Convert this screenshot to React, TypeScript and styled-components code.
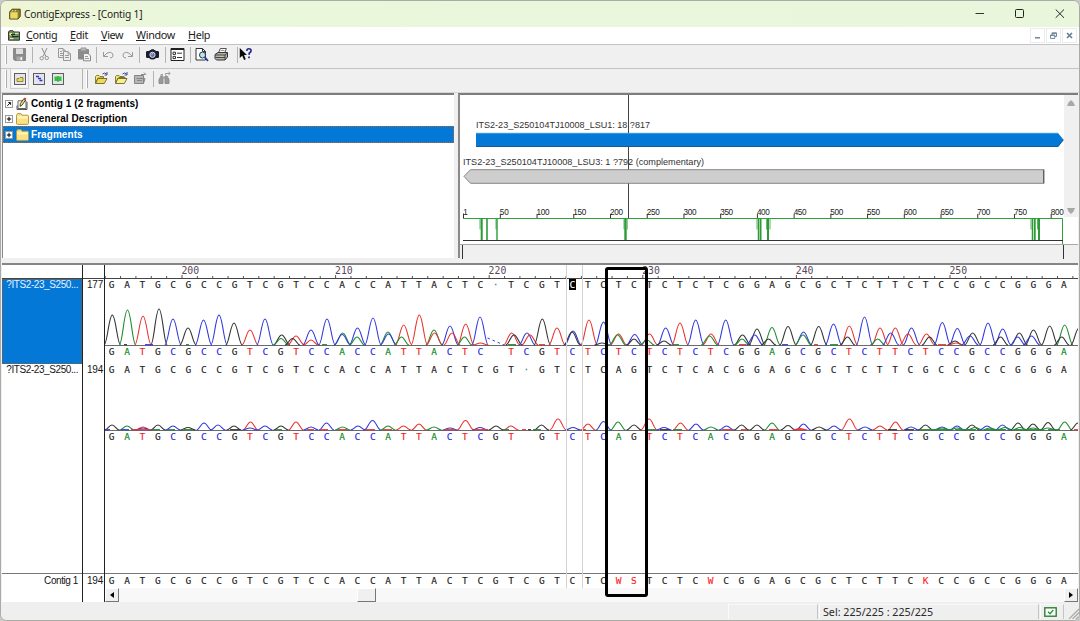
import React from "react";
import styled, { createGlobalStyle } from "styled-components";

const GlobalStyle = createGlobalStyle`
  * { box-sizing: border-box; }
  html, body { margin: 0; padding: 0; background: #c9c9c9; overflow: hidden; }
  svg { display: block; }
`;

const SANS = `"Liberation Sans", Arial, sans-serif`;
const UI = `"Noto Sans", "Open Sans", sans-serif`;
const MONO = `"DejaVu Sans Mono", "Liberation Mono", monospace`;

const BLUE = "#0478d7";

const Window = styled.div`
  position: relative;
  width: 1080px;
  height: 621px;
  display: flex;
  flex-direction: column;
  background: #f0f0f0;
  border: 1px solid #a9aca6;
  border-radius: 7px;
  overflow: hidden;
`;

const TitleBar = styled.header`
  display: flex;
  align-items: center;
  height: 26px;
  padding: 0 14px 0 8px;
  background: linear-gradient(90deg, #f0f5d4 0, #e9f7db 180px, #eaf6dc 100%);
  flex: none;
`;

const Title = styled.span`
  margin-left: 3px;
  font: 10.2px/26px ${UI};
  letter-spacing: -0.2px;
  color: #1e1e1e;
  white-space: nowrap;
  flex: 1;
`;

const CaptionButtons = styled.div`
  display: flex;
  gap: 30px;
  align-items: center;
`;

const MenuBar = styled.nav`
  display: flex;
  align-items: center;
  height: 17px;
  padding: 0 2px 0 7px;
  background: #fff;
  flex: none;
`;

const MenuItem = styled.span<{ $w: number }>`
  width: ${(p) => p.$w}px;
  font: 10.8px/15px ${UI};
  letter-spacing: -0.35px;
  color: #1c1c1c;
  white-space: nowrap;
  position: relative;
  top: -1px;
  &::first-letter { text-decoration: underline; }
`;

const MdiButtons = styled.div`
  display: flex;
  gap: 1px;
  margin-left: auto;
`;

const MdiButton = styled.span`
  width: 15px;
  height: 15px;
  border: 1px solid #ececec;
  display: flex;
  align-items: center;
  justify-content: center;
`;

const Toolbar = styled.div<{ $lift: number }>`
  display: flex;
  align-items: center;
  height: 24px;
  padding: 0 0 ${(p) => p.$lift}px 4px;
  border-top: 1px solid #c4c4c4;
  background: #f0f0f0;
  flex: none;
`;

const Grip = styled.i<{ $ml?: number }>`
  width: 2px;
  height: 18px;
  margin-left: ${(p) => p.$ml ?? 0}px;
  border-right: 1px solid #aaa;
  border-left: 1px solid #fff;
`;

const Divider = styled.i<{ $ml: number; $tall?: boolean }>`
  width: 1px;
  height: ${(p) => (p.$tall ? 20 : 16)}px;
  margin-left: ${(p) => p.$ml}px;
  background: #b4b4b4;
`;

const Tool = styled.span<{ $ml: number; $pressed?: boolean }>`
  width: 15px;
  height: ${(p) => (p.$pressed ? 17 : 15)}px;
  margin-left: ${(p) => p.$ml}px;
  display: flex;
  align-items: center;
  justify-content: center;
  outline: ${(p) => (p.$pressed ? "1px solid #cfcfcf" : "none")};
  outline-offset: 1px;
  background: ${(p) => (p.$pressed ? "#f8f8f8" : "transparent")};
`;

const UpperPanes = styled.section`
  display: flex;
  gap: 4px;
  height: 168px;
  padding: 0 1px 2px;
  border-top: 1px solid #d6d6d6;
  flex: none;
`;

const TreePane = styled.div`
  width: 453px;
  background: #fff;
  border-top: 2px solid #7d7d7d;
  border-left: 1px solid #8a8a8a;
  padding-top: 1px;
`;

const TreeRow = styled.div<{ $h: number; $selected?: boolean }>`
  display: flex;
  align-items: center;
  height: ${(p) => p.$h}px;
  padding-left: 2px;
  font: bold 10px ${SANS};
  letter-spacing: 0.06px;
  color: ${(p) => (p.$selected ? "#fff" : "#000")};
  background: ${(p) => (p.$selected ? BLUE : "transparent")};
  outline: ${(p) => (p.$selected ? "1px dotted #b8682c" : "none")};
  outline-offset: -1px;
  white-space: nowrap;
`;

const Expander = styled.span`
  width: 8px;
  height: 8px;
  margin-right: 3px;
  flex: none;
`;

const RowIcon = styled.span`
  width: 14px;
  margin-right: 1px;
  flex: none;
`;

const MapPane = styled.div`
  flex: 1;
  display: flex;
  flex-direction: column;
  border-top: 2px solid #7d7d7d;
  border-left: 2px solid #8a8a8a;
  background: #fff;
`;

const MapBody = styled.div`
  display: flex;
  height: 149px;
`;

const MapScroll = styled.div`
  display: flex;
  flex-direction: column;
  justify-content: space-between;
  align-items: center;
  width: 14px;
  height: 122px;
  padding: 5px 0 3px;
  background: #f0f0f0;
`;

const MapFooter = styled.div`
  flex: 1;
  border-top: 1px solid #a8a8a8;
  background: #f0f0f0;
  display: flex;
  justify-content: space-between;
  padding: 0 14px 0 2px;
`;

const FooterMark = styled.i`
  width: 1px;
  height: 14px;
  background: #333;
`;

const Assembly = styled.section`
  position: relative;
  display: flex;
  height: 339px;
  margin: 3px 1px 0;
  border-top: 2px solid #858585;
  background: #fff;
  flex: none;
`;

const Column = styled.div<{ $w?: number }>`
  display: flex;
  flex-direction: column;
  ${(p) => (p.$w ? `width: ${p.$w}px; border-right: 1px solid #222;` : "flex: 1; min-width: 0;")}
`;

const Band = styled.div<{ $h: number; $line?: string; $selected?: boolean; $pt?: number }>`
  height: ${(p) => p.$h}px;
  padding-top: ${(p) => p.$pt ?? 0}px;
  flex: none;
  border-bottom: ${(p) => (p.$line ? `1px solid ${p.$line}` : "none")};
  background: ${(p) => (p.$selected ? BLUE : "transparent")};
  color: ${(p) => (p.$selected ? "#e4f1ff" : "#161616")};
  outline: ${(p) => (p.$selected ? "1px dotted #8a5a2c" : "none")};
  outline-offset: -1px;
  font: 10px/12px ${SANS};
  white-space: nowrap;
`;

const NameText = styled.div`
  text-align: right;
  padding-right: 4px;
  letter-spacing: -0.42px;
`;

const OffsetText = styled.div`
  text-align: right;
  padding-right: 1px;
  letter-spacing: -0.2px;
`;

const Bases = styled.div`
  display: flex;
  height: 12px;
  margin-left: -1px;
  font: 9.5px/12px ${MONO};
`;

const Base = styled.span<{ $color: string; $cursor?: boolean }>`
  width: 15.36px;
  flex: none;
  text-align: center;
  color: ${(p) => (p.$cursor ? "#fff" : p.$color)};
  -webkit-text-stroke: 0.12px currentColor;
  b { font-weight: normal; background: ${(p) => (p.$cursor ? "#000" : "transparent")}; padding: 0 1px; }
`;

const HScroll = styled.div`
  display: flex;
  height: 14px;
  background: #f8f8f8;
`;

const ScrollPart = styled.span<{ $w: number; $ml?: number }>`
  width: ${(p) => p.$w}px;
  height: 14px;
  margin-left: ${(p) => (p.$ml === undefined ? "auto" : p.$ml + "px")};
  background: #f0f0f0;
  border: 1px solid #fff;
  border-right-color: #777;
  border-bottom-color: #777;
  display: flex;
  align-items: center;
  justify-content: center;
`;

const ColumnMark = styled.i`
  position: absolute;
  left: 564px;
  top: 0;
  width: 17px;
  height: 323px;
  border: solid #d2d2d2;
  border-width: 0 1px;
`;

const Highlight = styled.i`
  position: absolute;
  left: 603px;
  top: 2px;
  width: 43px;
  height: 330px;
  border: 3px solid #000;
  border-radius: 3px;
`;

const StatusBar = styled.footer`
  display: flex;
  align-items: stretch;
  justify-content: flex-end;
  gap: 1px;
  flex: 1;
  padding-top: 2px;
  background: #efefef;
`;

const StatusCell = styled.div<{ $w: number }>`
  width: ${(p) => p.$w}px;
  height: 15px;
  padding-left: 3px;
  border-right: 1px solid #c4c4c4;
  border-top: 1px solid #f8f8f8;
  border-left: 1px solid #fbfbfb;
  font: 10.7px/14px ${UI};
  color: #2a2a2a;
  white-space: nowrap;
  display: flex;
  align-items: center;
`;

type Ink = "k" | "g" | "r" | "b";
const INK: Record<Ink, string> = { k: "#333", g: "#1e8c30", r: "#e8342e", b: "#3038dc" };
const BASE_INK: Record<string, string> = { G: "#1a1a1a", A: "#0c8a1c", T: "#ee1c1c", C: "#2828e4" };

const READ_1 = "GATGCGCCGTCGTCCACCATTACTC-TCGTCTCTCTCTCTCGGAGCGCTCTTCTCCGCCGGGA";
const READ_2 = "GATGCGCCGTCGTCCACCATTACTCGT-GTCTCAGTCTCACGGAGCGCTCTTCGCCGCCGGGA";
const CONTIG = "GATGCGCCGTCGTCCACCATTACTCGTCGTCTCWSTCTCWCGGAGCGCTCTTCKCCGCCGGGA";

/* ink, centre x, height */
type Peak = [Ink, number, number];

const TRACE_1: Peak[] = [
  ["k", 112.3, 30], ["g", 127.5, 35], ["r", 143, 29], ["k", 159, 36], ["b", 173, 26], ["k", 188, 17],
  ["b", 203.5, 25], ["b", 219, 30], ["k", 234, 22], ["r", 250, 15], ["b", 265, 26],
  ["k", 281.7, 10], ["g", 281, 6.5], ["r", 296, 9], ["k", 292.5, 6.5], ["b", 311, 15], ["r", 311, 5],
  ["b", 327, 26], ["g", 342.7, 12], ["b", 342.2, 10.5], ["b", 357.5, 17], ["g", 357, 8], ["b", 373, 27],
  ["g", 388, 13], ["b", 388.5, 11], ["r", 403.7, 20], ["g", 401.5, 8], ["r", 419.3, 30],
  ["g", 434, 15], ["r", 434.5, 12], ["b", 450, 19], ["r", 452, 12], ["r", 465.7, 21], ["g", 464.5, 8],
  ["b", 480, 28], ["r", 480.5, 2], ["r", 511.7, 12], ["k", 514, 10], ["b", 527, 12], ["r", 530, 10],
  ["k", 542.3, 26], ["r", 557, 17], ["b", 573, 14], ["k", 572, 13], ["r", 589, 25], ["b", 603.5, 23],
  ["k", 602, 2], ["r", 618.5, 11], ["g", 617.5, 10], ["b", 634.7, 10.5], ["k", 634, 6], ["r", 649.5, 11],
  ["g", 647, 5], ["b", 665.7, 17], ["k", 664, 4], ["r", 680, 22], ["b", 695.7, 25], ["r", 711, 11],
  ["g", 709.5, 9], ["b", 725.7, 25], ["k", 742.5, 10], ["g", 742, 6], ["k", 757, 16], ["b", 754.7, 10],
  ["g", 772, 17.5], ["k", 768.5, 6], ["k", 788, 18.5], ["b", 803.5, 13], ["g", 803, 10],
  ["k", 818.7, 18.5], ["b", 833.5, 21], ["r", 849.3, 19], ["k", 847.5, 8], ["b", 864.5, 28],
  ["r", 880, 17], ["g", 877.7, 6], ["r", 895.3, 17], ["b", 890.7, 12], ["b", 911.5, 17], ["r", 908, 11],
  ["r", 926.5, 11], ["k", 929.5, 8], ["b", 942.3, 22.5], ["b", 957.3, 16.5], ["k", 955, 4], ["r", 956, 2],
  ["k", 972.7, 12], ["b", 970, 9], ["b", 988, 22], ["b", 1002.7, 16], ["k", 1000.5, 8],
  ["k", 1019.3, 12], ["b", 1017.7, 8], ["k", 1033.5, 15], ["b", 1031.5, 9], ["k", 1049.7, 19],
  ["g", 1064.7, 20], ["k", 1061.7, 8], ["k", 1079, 17],
];

const TRACE_2: Peak[] = [
  ["k", 112, 5], ["g", 127, 4], ["r", 143, 3], ["b", 143, 2], ["k", 158, 5], ["b", 173, 4], ["k", 188, 2.5],
  ["b", 204, 7], ["b", 218, 5], ["k", 234, 4], ["r", 250.5, 8], ["b", 250, 2], ["b", 265, 4],
  ["k", 281, 4], ["r", 296, 8], ["b", 311, 3], ["b", 326.5, 7], ["g", 342.5, 3], ["b", 358, 4],
  ["b", 372.5, 9.5], ["g", 388, 4], ["r", 403.5, 4], ["r", 419, 6], ["g", 434, 3], ["b", 450, 2],
  ["r", 465.5, 9.5], ["b", 480, 2.5], ["k", 496, 4], ["r", 511, 4], ["k", 541.5, 5], ["r", 558, 11],
  ["b", 573, 2.5], ["r", 588, 6], ["b", 603.5, 8.5], ["g", 618, 8], ["k", 634, 5], ["r", 649, 11],
  ["b", 664, 2.5], ["r", 680.5, 7], ["b", 696, 6], ["g", 711, 3], ["b", 726.5, 4], ["k", 741.5, 5],
  ["k", 757, 5], ["g", 772, 7], ["k", 788, 4.5], ["b", 803.5, 6], ["r", 800, 1.5], ["k", 819, 3],
  ["b", 834, 4], ["r", 849.5, 11], ["b", 865, 3], ["r", 880, 4], ["r", 895.5, 8], ["b", 911, 3],
  ["k", 925.5, 5], ["b", 942, 3], ["g", 942, 2], ["b", 957, 4], ["g", 957, 2], ["k", 972, 5], ["g", 975, 2.5],
  ["b", 987, 4], ["g", 990, 2], ["b", 1002.5, 5], ["g", 1005, 2.5], ["k", 1018, 7], ["g", 1020, 2.5],
  ["k", 1033, 6], ["g", 1033, 2], ["k", 1048, 7.5], ["g", 1048, 2], ["g", 1064.7, 8], ["k", 1078, 7],
];

/* short coloured runs lying on the zero line: ink, start x, end x */
const FLOOR_1: [Ink, number, number][] = [
  ["k", 124, 127], ["b", 145, 153], ["g", 186, 189], ["g", 322, 327], ["g", 508, 516], ["r", 539, 545],
  ["g", 673, 679], ["r", 739, 746], ["b", 782, 788], ["r", 814, 818], ["g", 830, 838], ["r", 938, 946],
];
const FLOOR_2: [Ink, number, number][] = [
  ["b", 106, 110], ["b", 121, 129], ["r", 131, 150], ["g", 153, 160], ["g", 168, 175], ["g", 182, 193],
  ["k", 230, 240], ["g", 276, 282], ["r", 307, 314], ["r", 320, 328], ["r", 338, 347], ["r", 365, 375],
  ["r", 383, 392], ["r", 444, 455], ["r", 474, 488], ["g", 503, 509], ["r", 522, 526], ["k", 528, 531],
  ["g", 533, 541], ["r", 583, 586], ["g", 647, 656], ["k", 660, 669], ["g", 673, 682], ["r", 722, 733],
  ["r", 741, 747], ["r", 769, 778], ["r", 795, 806], ["k", 888, 897], ["k", 905, 914], ["g", 920, 950],
  ["g", 955, 976], ["g", 984, 1006], ["g", 1014, 1044], ["g", 1048, 1060], ["r", 1074, 1078],
];

function peakPath(x: number, h: number, base: number, w: number) {
  const top = base - h;
  return `M${x - w} ${base}C${x - w * 0.6} ${base} ${x - w * 0.42} ${top} ${x} ${top}S${x + w * 0.6} ${base} ${x + w} ${base}`;
}

function Trace({ peaks, floor, height, gap }: { peaks: Peak[]; floor: [Ink, number, number][]; height: number; gap?: boolean }) {
  const base = height - 1;
  return (
    <svg width={973} height={height} viewBox={`105 0 973 ${height}`}>
      <path d={`M105 ${base + 0.5}H1078`} stroke="#6a6a6a" />
      {peaks.map(([ink, x, h], i) => (
        <path key={i} d={peakPath(x, h, base, h < 9 ? 7.5 : 8.3)} fill="none" stroke={INK[ink]} strokeWidth={1.1} />
      ))}
      {gap && <path d={`M487.5 ${base - 7}L504 ${base}`} stroke={INK.b} strokeDasharray="2.5 3" fill="none" />}
      {floor.map(([ink, a, b], i) => (
        <path key={i} d={`M${a} ${base - 0.3}H${b}`} stroke={INK[ink]} strokeWidth={1.2} />
      ))}
    </svg>
  );
}

function BaseRow({ seq, colored, cursor, marks }: { seq: string; colored?: boolean; cursor?: number; marks?: boolean }) {
  return (
    <Bases>
      {seq.split("").map((c, i) => {
        const blank = c === "-" && colored;
        let color = "#1a1a1a";
        if (colored) color = BASE_INK[c] ?? "#1a1a1a";
        if (marks && "WSK".includes(c)) color = "#ff2020";
        if (c === "-") color = "#1a8a9a";
        return (
          <Base key={i} $color={color} $cursor={cursor === i}>
            <b>{blank ? "" : c === "-" ? "·" : c}</b>
          </Base>
        );
      })}
    </Bases>
  );
}

function PositionRuler() {
  return (
    <svg width={973} height={13} viewBox="105 0 973 13">
      {Array.from({ length: 64 }, (_, i) => {
        const x = 105.2 + i * 15.36;
        return <path key={i} d={`M${x} ${i % 10 === 5 ? 10 : 11}V13`} stroke="#555" />;
      })}
      {[200, 210, 220, 230, 240, 250].map((n, i) => (
        <text key={n} x={181.4 + i * 153.6} y={8.7} fontFamily={MONO} fontSize={9.8} fill="#584858">{n}</text>
      ))}
    </svg>
  );
}

function FragmentMap() {
  const px = (n: number) => 463.6 + n * 0.7345;
  const drops: [number, number, number][] = [
    [480, 11, 1], [481.7, 22, 2], [487, 22, 1.6], [496, 11, 1], [497, 22, 1.4],
    [624, 11, 1], [625.5, 22, 2.4], [627.2, 11, 1], [757, 11, 1], [758.5, 22, 1.5], [760.6, 22, 1.8],
    [766.6, 11, 1], [768, 22, 2], [770, 11, 1], [1031, 11, 1], [1032.5, 22, 1.5], [1034.8, 22, 1.8],
    [1037.5, 11, 1], [1039, 22, 2],
  ];
  return (
    <svg width={604} height={149} viewBox="460 95 604 149">
      <path d="M476 133H1058L1063.5 139.7L1058 147H476Z" fill={BLUE} />
      <path d="M476 146.5H1058L1063.5 139.7" fill="none" stroke="#1b588e" />
      <path d="M476 133.2H1058" fill="none" stroke="#5fb2ee" strokeWidth={0.8} />
      <path d="M464 176.4L470.5 169.7H1043.5V183.3H470.5Z" fill="#cecece" stroke="#868686" />
      <path d="M1043.8 169.5V183.5" stroke="#555" strokeWidth={1.2} />
      <path d="M628.5 95V133M628.5 147V169.5M628.5 183.5V218" stroke="#444" />
      <g fontFamily={SANS} fontSize={9.2} fill="#333">
        <text x={476} y={128} textLength={174} lengthAdjust="spacingAndGlyphs">ITS2-23_S250104TJ10008_LSU1: 18 ?817</text>
        <text x={463} y={165} textLength={241} lengthAdjust="spacingAndGlyphs">ITS2-23_S250104TJ10008_LSU3: 1 ?792 (complementary)</text>
      </g>
      <path d="M463.5 213.5V218" stroke="#333" />
      <text x={463.3} y={214.5} fontFamily={SANS} fontSize={8.2} fill="#222">1</text>
      {Array.from({ length: 16 }, (_, i) => (i + 1) * 50).map((n) => (
        <g key={n}>
          <path d={`M${px(n)} 214V218`} stroke="#333" />
          <text x={px(n) - 0.5} y={214.5} fontFamily={SANS} fontSize={8.2} fill="#222" textLength={n < 100 ? 9 : 13}>{n}</text>
        </g>
      ))}
      <path d="M463 218.5H1062.5V244" fill="none" stroke="#2f9e38" />
      {drops.map(([x, h, w], i) => (
        <path key={i} d={`M${x} 218.5V${218.5 + h}`} stroke={h < 20 ? "#5cb464" : "#2c9a36"} strokeWidth={w} />
      ))}
      <path d="M463 240.5H1063" stroke="#333" />
    </svg>
  );
}

const Folder = () => (
  <svg width={13} height={12} viewBox="0 0 13 12">
    <path d="M.5 2.4L1.5.6H5L6 2.2H11.6q.9 0 .9.9V10.4q0 1-.9 1H1.4q-.9 0-.9-1Z" fill="#f9e184" stroke="#b39a48" />
    <path d="M1.2 3.3H11.8V5.6H1.2Z" fill="#fff3b8" />
  </svg>
);

const PlusBox = ({ arrow }: { arrow?: boolean }) => (
  <svg width={8} height={8} viewBox="0 0 8 8">
    <rect x={0.5} y={0.5} width={7} height={7} fill="#fff" stroke="#999" />
    {arrow ? <path d="M2.3 5.8L5 3M3.3 2.5H5.6V4.8" stroke="#111" fill="none" /> : <path d="M1.8 4H6.2M4 1.8V6.2" stroke="#000" />}
  </svg>
);

const Notebook = () => (
  <svg width={13} height={14} viewBox="0 0 13 14">
    <path d="M2 3.8H10V11.5H2Z" fill="#fff" stroke="#555" strokeWidth={0.9} />
    <path d="M1 8.5V12.5H11V5" fill="none" stroke="#444" strokeWidth={0.9} />
    <path d="M4 9.4L4.3 6.6L7.6 2L9.4 3.3L6.2 8Z" fill="#f2df55" stroke="#222" strokeWidth={0.8} />
    <path d="M7.6 2L8.7.5L10.5 1.8L9.4 3.3Z" fill="#c0304a" />
  </svg>
);

const I = ({ children }: { children: React.ReactNode }) => (
  <svg width={15} height={15} viewBox="0 0 15 15" fill="none" stroke="#999" strokeWidth={1}>{children}</svg>
);

const Save = () => (
  <I><path d="M1.5 1.5H13.5V13.5H2.8L1.5 12.2Z" fill="#8a8a8a" stroke="#8a8a8a" /><path d="M4 1.5H11V7H4Z" fill="#dedede" stroke="none" /><path d="M4.5 9.5H11V13.5H4.5Z" fill="#a8a8a8" stroke="none" /><path d="M8.5 10.3H10V13H8.5Z" fill="#fff" stroke="none" /></I>
);
const Cut = () => <I><path d="M4.8 1L9 9.5M10 1L6 9.5" stroke="#8c8c8c" /><circle cx={4.7} cy={11.2} r={1.7} /><circle cx={9.8} cy={11} r={1.7} /></I>;
const Copy = () => (
  <I><path d="M1.5 1.5H6L8.5 4V10.5H1.5ZM6 1.5V4H8.5M3 4.5H5M3 6.5H7M3 8.5H7" /><path d="M6.5 4.5H11L13.5 7V13.5H6.5Z" fill="#eee" /><path d="M11 4.5V7H13.5M8 8.5H12M8 10.5H12" /></I>
);
const Paste = () => (
  <I><path d="M1.5 2.5H11.5V12H1.5Z" fill="#8c8c8c" stroke="#8c8c8c" /><path d="M4 1H9V3.8H4Z" fill="#bbb" /><path d="M6.5 6.5H11L13.5 8.7V13.8H6.5Z" fill="#f2f2f2" stroke="#888" /><path d="M8 9.5H11M8 11.5H12" /></I>
);
const Undo = ({ flip }: { flip?: boolean }) => (
  <I><g transform={flip ? "translate(15 0) scale(-1 1)" : undefined}><path d="M2.5 5V9.5H7M2.8 9.2Q6 5 9.3 5.3Q12.5 6 12 9Q11.5 11 9 11" /></g></I>
);
const Camera = () => (
  <I><path d="M4.6 4V3H6.2V2.2H9V3H10.4V4H12.5Q14 4 14 5.2V10Q14 11 12.7 11H11Q9.5 12.5 7.5 12.5T4 11H2.3Q1 11 1 10V5.2Q1 4 2.5 4Z" fill="#191d2c" stroke="none" /><circle cx={7.5} cy={7.8} r={2.6} fill="#5c70a8" stroke="#dfe3ee" /><path d="M6.6 7.6L7.8 6.6" stroke="#fff" /></I>
);
const Options = () => (
  <I><path d="M1 1.5H14V13.5H1Z" fill="#fff" stroke="#222" /><path d="M1 2H14" stroke="#222" strokeWidth={2} /><path d="M3 5.2H5.5V7.4H3ZM3 9.4H5.5V11.6H3Z" stroke="#333" /><path d="M7 6.2H12M7 10.5H12" stroke="#333" /></I>
);
const Preview = () => (
  <I><path d="M2 1.5H8.5L11.5 4.5V13H2Z" fill="#fff" stroke="#333" /><path d="M8.5 1.5V4.5H11.5" stroke="#333" /><circle cx={8.5} cy={8} r={3} fill="#bfe4f0" stroke="#25364e" /><path d="M10.8 10.4L14 13.8" stroke="#25369e" strokeWidth={1.7} /></I>
);
const Print = () => (
  <I><path d="M4.4 6L6.3 1.5H12.3L10.8 6Z" fill="#fff" stroke="#555" /><path d="M6.5 3.5H10.5" stroke="#999" /><path d="M1 7.5L4 5.5H13.5V10L11 13H2.5L1 11.5Z" fill="#b4b4b4" stroke="#333" /><path d="M1 8H11L13.5 6M11 8V13M1.5 10.5H11" stroke="#444" /><path d="M6 9.4H9.5" stroke="#e4d452" /></I>
);
const ContextHelp = () => (
  <svg width={17} height={15} viewBox="0 0 17 15"><path d="M2 0V11.5L4.8 8.9L6.9 13.6L8.8 12.8L6.8 8.2H10.2Z" fill="#080808" /><path d="M10 3.4Q10 1 12.3 1Q14.8 1 14.8 3.2Q14.8 4.8 12.9 5.7L12.5 8" fill="none" stroke="#22288c" strokeWidth={1.9} /><path d="M11.5 9.8H13.5V11.8H11.5Z" fill="#22288c" /></svg>
);
const Framed = ({ children }: { children: React.ReactNode }) => (
  <svg width={12} height={12} viewBox="0 0 12 12" fill="none"><rect x={0.5} y={0.5} width={11} height={11} fill="#e4e4ea" stroke="#8a8a8a" /><rect x={0.5} y={0.5} width={11} height={11} stroke="#333" strokeDasharray="1 1" />{children}</svg>
);
const OpenFolder = ({ full }: { full?: boolean }) => (
  <I><path d="M1.5 5.5L2.5 4.5H5L6 5.5H9.5V7H4L1.5 12Z" fill="#f6e56c" stroke="#6f6522" strokeWidth={0.8} /><path d="M1.5 12.5L4 7.5H13L10.3 12.5Z" fill={full ? "#f3ef93" : "#f0d95a"} stroke="#6f6522" strokeWidth={0.9} /><path d="M8.5 3Q10.5 1 12.5 3M13 1V4H10.5" stroke="#2b378a" strokeWidth={0.9} />{full && <path d="M5 6.3H11V7.5" stroke="#6f6522" />}</I>
);
const CloseFolder = () => (
  <I><path d="M1.5 4.5H10.5V12.5H1.5Z" fill="#b6b6b6" stroke="#858585" /><path d="M3.5 7.5H12L10.5 12.5" stroke="#858585" /><path d="M8 3.5H12.5M11 1.5L13 3.5M4 9.5H9" stroke="#888" /></I>
);
const Binoculars = () => (
  <I><path d="M2 12.5V8.5L4 5H6V12.5ZM8 12.5V5H10L12 8.5V12.5ZM6 7H8" fill="#999" stroke="#909090" /><path d="M4 5V3.5H6M8.5 3.8V2.5H13M11.5 1L13.2 2.5L11.5 4" /></I>
);

const MenuIcon = styled.svg`
  margin-right: 6px;
  flex: none;
`;

export default function App() {
  return (
    <>
      <GlobalStyle />
      <Window>
        <TitleBar>
          <svg width={12} height={12} viewBox="0 0 12 12">
            <path d="M.7 3.8L3 1.2H11.2V8.4L9 11H.7Z" fill="#90842c" stroke="#4b461c" />
            <path d="M1.3 4.3H8.6V10.4H1.3Z" fill="#efd962" /><path d="M4 2L3 3.5M7 2L6 3.5" stroke="#f7ee99" />
          </svg>
          <Title>ContigExpress - [Contig 1]</Title>
          <CaptionButtons>
            <svg width={10} height={10} viewBox="0 0 10 10"><path d="M.5 4.5H9" stroke="#333" /></svg>
            <svg width={10} height={10} viewBox="0 0 10 10"><rect x={0.5} y={0.5} width={8} height={8} rx={1} fill="none" stroke="#222" /></svg>
            <svg width={10} height={10} viewBox="0 0 10 10"><path d="M.7 .5L9 8.8M9 .5L.7 8.8" stroke="#222" /></svg>
          </CaptionButtons>
        </TitleBar>
        <MenuBar>
          <MenuIcon width={12} height={11} viewBox="0 0 12 11">
            <path d="M.5 2L1.5.7H5L6 2H11.5V10.2H.5Z" fill="#7c8460" stroke="#3c3a28" />
            <path d="M1.5 3H4V5.5H1.5Z" fill="#e6ea80" /><path d="M3 4.6H7M4 6.5H10.5" stroke="#1c2f20" strokeWidth={1.4} /><path d="M5 5.5H9.5M7 8.3H11" stroke="#35c860" /><path d="M7 3.3H10.5M2 8.6H5.5" stroke="#eee" />
          </MenuIcon>
          <MenuItem $w={44}>Contig</MenuItem>
          <MenuItem $w={31}>Edit</MenuItem>
          <MenuItem $w={35}>View</MenuItem>
          <MenuItem $w={52}>Window</MenuItem>
          <MenuItem $w={30}>Help</MenuItem>
          <MdiButtons>
            <MdiButton><svg width={7} height={7} viewBox="0 0 7 7"><path d="M1 5.8H6" stroke="#72879a" strokeWidth={1.5} /></svg></MdiButton>
            <MdiButton><svg width={7} height={7} viewBox="0 0 7 7" fill="#fff" stroke="#72879a"><path d="M2 .8H6.5V4.5H2ZM2 1.5H6.5" /><path d="M.5 3H4.8V6.4H.5ZM.5 3.5H4.8" /></svg></MdiButton>
            <MdiButton><svg width={7} height={7} viewBox="0 0 7 7"><path d="M1 1L6 6M6 1L1 6" stroke="#657d92" strokeWidth={1.6} /></svg></MdiButton>
          </MdiButtons>
        </MenuBar>
        <Toolbar $lift={4}>
          <Grip />
          <Tool $ml={5}><Save /></Tool>
          <Divider $ml={5} />
          <Tool $ml={4}><Cut /></Tool>
          <Tool $ml={5}><Copy /></Tool>
          <Tool $ml={5}><Paste /></Tool>
          <Divider $ml={4} />
          <Tool $ml={4}><Undo /></Tool>
          <Tool $ml={4}><Undo flip /></Tool>
          <Divider $ml={4} />
          <Tool $ml={5}><Camera /></Tool>
          <Divider $ml={5} />
          <Tool $ml={4}><Options /></Tool>
          <Divider $ml={5} />
          <Tool $ml={3}><Preview /></Tool>
          <Tool $ml={5}><Print /></Tool>
          <Divider $ml={8} />
          <Tool $ml={0}><ContextHelp /></Tool>
        </Toolbar>
        <Toolbar $lift={4}>
          <Grip />
          <Tool $ml={5} $pressed>
            <Framed><path d="M3 5.5H5L6 4.5H9V8.5H3Z" fill="#eedb4e" stroke="#6c6526" strokeWidth={0.7} /></Framed>
          </Tool>
          <Tool $ml={4}><Framed><path d="M3 3.5H6M5 5.5H8M6.5 7.5H9.5" stroke="#2835dc" strokeWidth={1.4} /></Framed></Tool>
          <Tool $ml={4}><Framed><path d="M2.5 3.5H5.6V8H2.5Z" fill="#25c832" /><path d="M6.5 3.5H9.5V8H6.5Z" fill="#12d62a" /><path d="M6 3V9" stroke="#267c32" /></Framed></Tool>
          <Divider $ml={17} $tall />
          <Grip $ml={3} />
          <Tool $ml={6}><OpenFolder /></Tool>
          <Tool $ml={5}><OpenFolder full /></Tool>
          <Tool $ml={4}><CloseFolder /></Tool>
          <Divider $ml={5} />
          <Tool $ml={3}><Binoculars /></Tool>
        </Toolbar>
        <UpperPanes>
          <TreePane>
            <TreeRow $h={15}><Expander><PlusBox arrow /></Expander><RowIcon><Notebook /></RowIcon>Contig 1 (2 fragments)</TreeRow>
            <TreeRow $h={15}><Expander><PlusBox /></Expander><RowIcon><Folder /></RowIcon>General Description</TreeRow>
            <TreeRow $h={17} $selected><Expander><PlusBox /></Expander><RowIcon><Folder /></RowIcon>Fragments</TreeRow>
          </TreePane>
          <MapPane>
            <MapBody>
              <FragmentMap />
              <MapScroll>
                <svg width={8} height={6} viewBox="0 0 8 6"><path d="M0 6L1.5 2.5L4 0L6.5 2.5L8 6Z" fill="#a8a8a8" /></svg>
                <svg width={8} height={6} viewBox="0 0 8 6"><path d="M0 0H8L6.5 3.5L4 6L1.5 3.5Z" fill="#a8a8a8" /></svg>
              </MapScroll>
            </MapBody>
            <MapFooter><FooterMark /><FooterMark /></MapFooter>
          </MapPane>
        </UpperPanes>
        <Assembly>
          <Column $w={81}>
            <Band $h={14} $line="#444" />
            <Band $h={85} $selected><NameText>?ITS2-23_S250...</NameText></Band>
            <Band $h={210} $line="#777"><NameText>?ITS2-23_S250...</NameText></Band>
            <Band $h={14} $pt={1}><NameText>Contig 1</NameText></Band>
          </Column>
          <Column $w={22}>
            <Band $h={14} $line="#444" />
            <Band $h={85}><OffsetText>177</OffsetText></Band>
            <Band $h={210} $line="#777"><OffsetText>194</OffsetText></Band>
            <Band $h={14} $pt={1}><OffsetText>194</OffsetText></Band>
          </Column>
          <Column>
            <Band $h={14} $line="#444"><PositionRuler /></Band>
            <Band $h={85}>
              <BaseRow seq={READ_1} cursor={30} />
              <Trace peaks={TRACE_1} floor={FLOOR_1} height={55} gap />
              <BaseRow seq={READ_1} colored />
            </Band>
            <Band $h={210} $line="#777">
              <BaseRow seq={READ_2} />
              <Trace peaks={TRACE_2} floor={FLOOR_2} height={55} />
              <BaseRow seq={READ_2} colored />
            </Band>
            <Band $h={14} $pt={1}><BaseRow seq={CONTIG} marks /></Band>
            <HScroll>
              <ScrollPart $w={14} $ml={0}><svg width={4} height={6} viewBox="0 0 4 6"><path d="M4 0V6L0 3Z" /></svg></ScrollPart>
              <ScrollPart $w={19} $ml={238} />
              <ScrollPart $w={14}><svg width={4} height={6} viewBox="0 0 4 6"><path d="M0 0V6L4 3Z" /></svg></ScrollPart>
            </HScroll>
          </Column>
          <ColumnMark />
          <Highlight />
        </Assembly>
        <StatusBar>
          <StatusCell $w={90} />
          <StatusCell $w={220}>Sel: 225/225 : 225/225</StatusCell>
          <StatusCell $w={24}>
            <svg width={13} height={10} viewBox="0 0 13 10"><rect x={0.8} y={0.8} width={11.4} height={8.4} fill="#fff" stroke="#2f7f34" strokeWidth={1.4} /><path d="M4 4.8L6 6.8L9.3 3" fill="none" stroke="#259a2e" strokeWidth={1.3} /></svg>
          </StatusCell>
          <svg width={14} height={15} viewBox="0 0 14 15"><path d="M4 15L14 5M7.5 15L14 8.5M11 15L14 12" stroke="#aaa" strokeWidth={1.3} /></svg>
        </StatusBar>
      </Window>
    </>
  );
}
